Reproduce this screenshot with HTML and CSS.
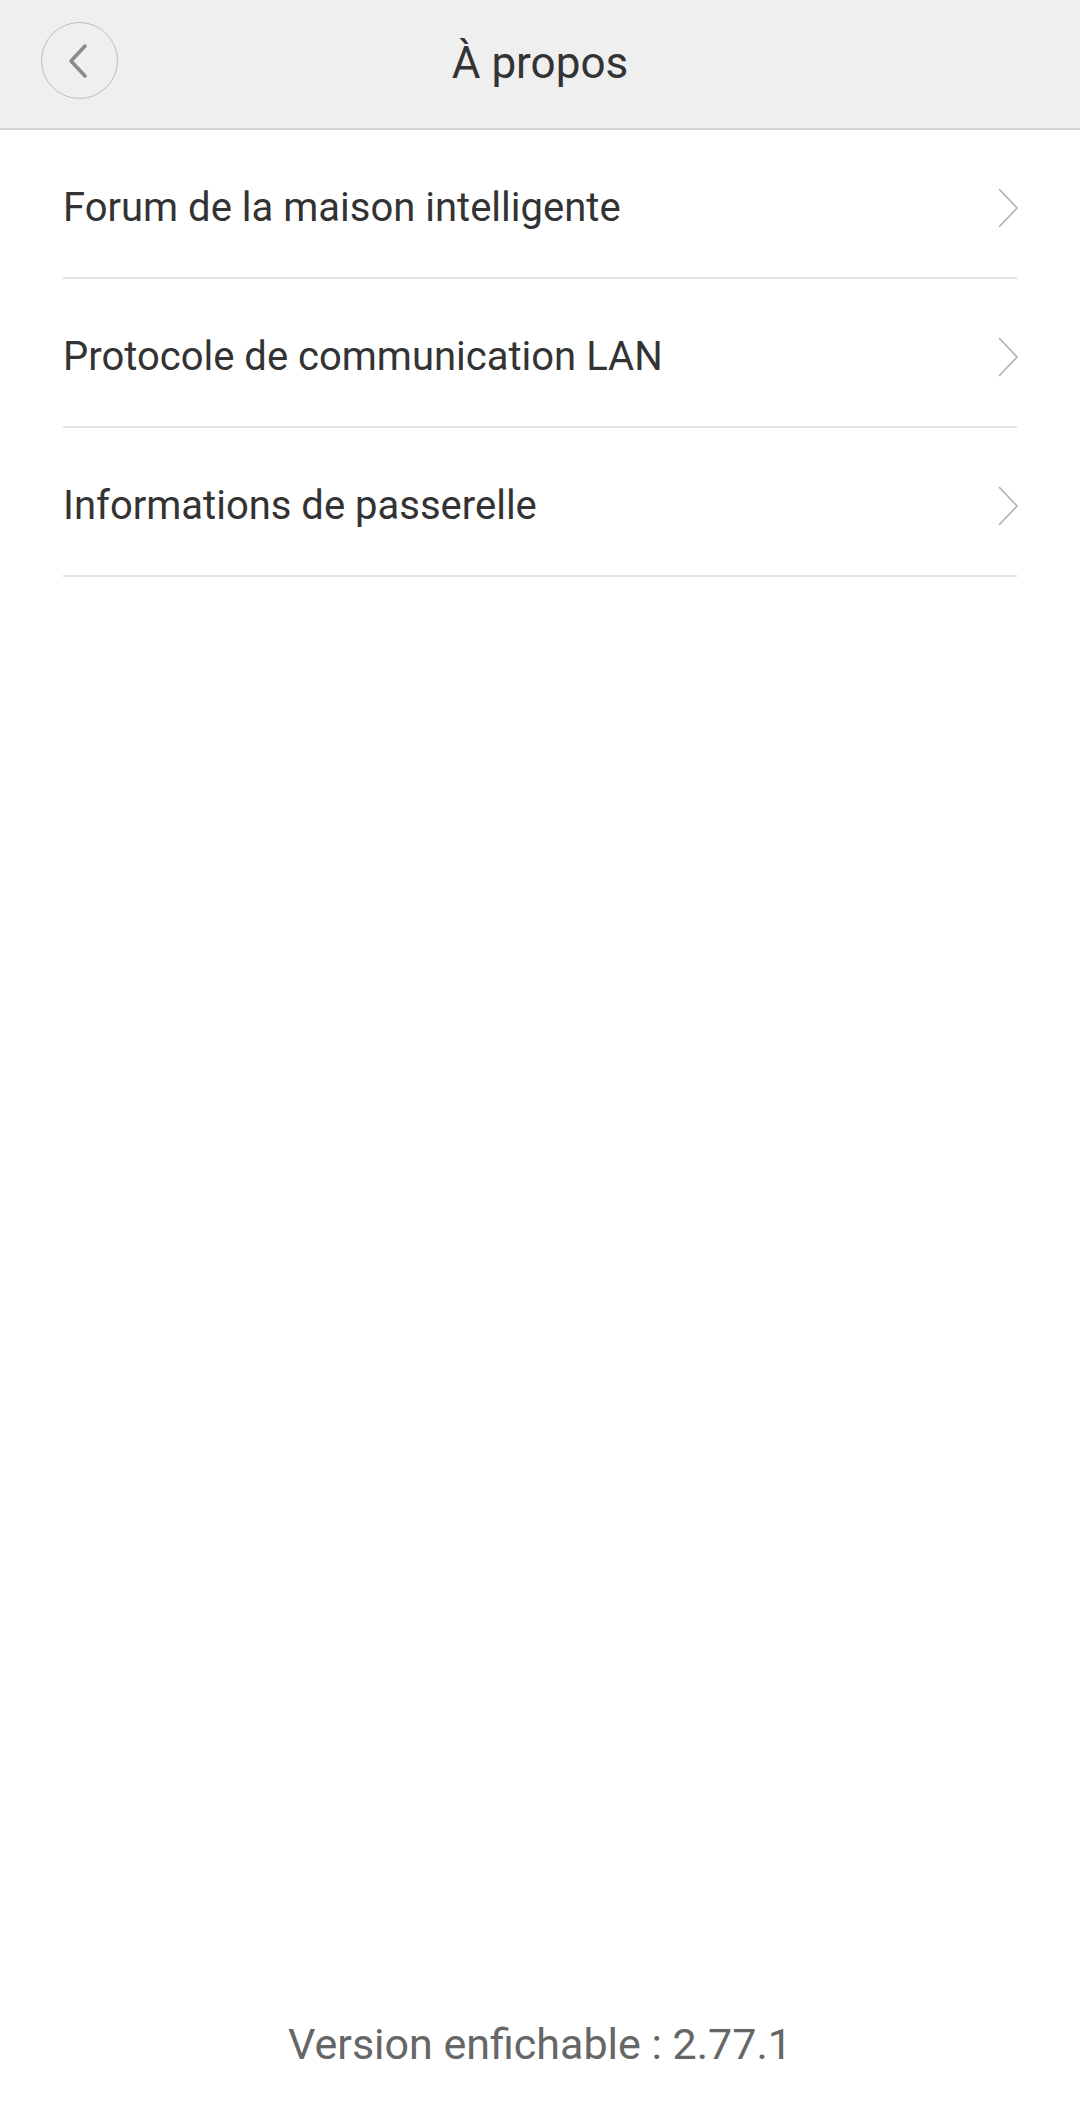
FILE: index.html
```html
<!DOCTYPE html>
<html lang="fr">
<head>
    <meta charset="UTF-8">
    <title>À propos</title>
    <link rel="stylesheet" href="styles.css">
</head>
<body>

<div class="page">
    <header class="topbar">
        <button class="back-btn" aria-label="Retour">
            <svg width="22" height="36" viewBox="0 0 22 36">
                <polyline points="18,3 4,18 18,33" fill="none" stroke="#8a8a8a" stroke-width="3.5" stroke-linecap="round" stroke-linejoin="round"/>
            </svg>
        </button>
        <h1 class="title">À propos</h1>
    </header>

    <ul class="menu">
        <li class="menu-item">
            <span>Forum de la maison intelligente</span>
            <svg class="arrow" width="22" height="40" viewBox="0 0 22 40">
                <polyline points="2,1 20,20 2,39" fill="none" stroke="#b5b5b5" stroke-width="1.8"/>
            </svg>
        </li>
        <li class="menu-item">
            <span>Protocole de communication LAN</span>
            <svg class="arrow" width="22" height="40" viewBox="0 0 22 40">
                <polyline points="2,1 20,20 2,39" fill="none" stroke="#b5b5b5" stroke-width="1.8"/>
            </svg>
        </li>
        <li class="menu-item">
            <span>Informations de passerelle</span>
            <svg class="arrow" width="22" height="40" viewBox="0 0 22 40">
                <polyline points="2,1 20,20 2,39" fill="none" stroke="#b5b5b5" stroke-width="1.8"/>
            </svg>
        </li>
    </ul>

    <footer class="version">Version enfichable : 2.77.1</footer>
</div>

</body>
</html>
```

FILE: styles.css
```css
body {
    margin: 0;
    font-family: Roboto, "Noto Sans", sans-serif;
    background-color: #fff;
}

.page {
    display: flex;
    flex-direction: column;
    min-height: 2118px;
}

.topbar {
    height: 128px;
    border-bottom: 2px solid #d4d4d4;
    background-color: #efefef;
    display: flex;
    align-items: center;
    justify-content: center;
    position: relative;
}

.back-btn {
    position: absolute;
    left: 41px;
    top: 22px;
    width: 77px;
    height: 77px;
    border-radius: 50%;
    border: 1.5px solid #bdbdbd;
    background: transparent;
    display: flex;
    align-items: center;
    justify-content: center;
    padding: 0 4px 0 0;
}

.title {
    margin: 0 0 2px;
    font-size: 44px;
    font-weight: normal;
    color: #333;
}

.menu {
    list-style: none;
    margin: 0 63px;
    padding: 0;
}

.menu-item {
    box-sizing: border-box;
    height: 149px;
    padding-top: 8px;
    border-bottom: 2px solid #e2e2e2;
    display: flex;
    align-items: center;
    justify-content: space-between;
    font-size: 40px;
    color: #333;
}

.arrow {
    margin-right: -2px;
}

.version {
    margin-top: auto;
    padding-bottom: 49px;
    text-align: center;
    font-size: 43px;
    color: #666;
}
```
